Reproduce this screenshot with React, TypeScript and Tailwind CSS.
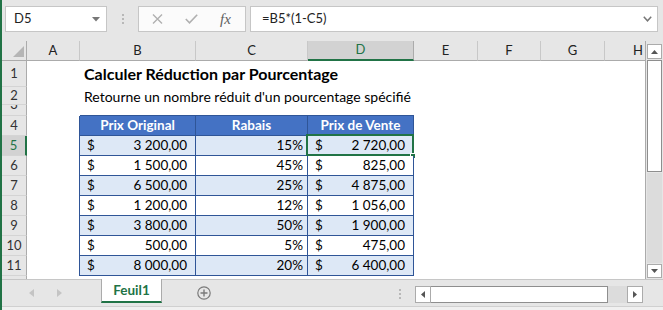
import React from "react";

const LETTERS = ["A", "B", "C", "D", "E", "F", "G", "H"];
const W = ["w-[53px]", "w-[116px]", "w-[112px]", "w-[106px]", "w-[64px]", "w-[63px]", "w-[64px]", "w-[41px]"];

const DATA: [string, string, string][] = [
  ["3 200,00", "15%", "2 720,00"],
  ["1 500,00", "45%", "825,00"],
  ["6 500,00", "25%", "4 875,00"],
  ["1 200,00", "12%", "1 056,00"],
  ["3 800,00", "50%", "1 900,00"],
  ["500,00", "5%", "475,00"],
  ["8 000,00", "20%", "6 400,00"],
];

function RowHeader({ label, selected, h, clip }: { label: string; selected?: boolean; h: string; clip?: boolean }) {
  return (
    <div
      className={
        "w-[25px] shrink-0 overflow-hidden border-b border-[#d4d4d4] text-[13px] " +
        h +
        " " +
        (selected
          ? "bg-[#d2d2d2] text-[#217346] border-r-2 border-r-[#217346]"
          : "bg-[#e6e6e6] text-[#333] border-r border-r-[#ababab]")
      }
    >
      {clip ? (
        <div className="h-[20px] -mt-[10px] flex items-center justify-center">{label}</div>
      ) : (
        <div className="h-full flex items-center justify-center">{label}</div>
      )}
    </div>
  );
}

function Blank({ i }: { i: number }) {
  return <div className={W[i] + " shrink-0 h-full bg-white"} />;
}

export default function App() {
  return (
    <div className="w-[663px] h-[310px] overflow-hidden bg-[#e6e6e6] border-l-2 border-[#217346] flex flex-col font-['Lato',sans-serif] text-black">
      {/* Formula bar */}
      <div className="h-[41px] shrink-0 flex items-start pt-[6px]">
        <div className="ml-[3px] w-[102px] h-[26px] bg-white border border-[#c6c6c6] flex items-center pl-[8px] pr-[6px] text-[13px] text-[#222]">
          <span className="flex-1">D5</span>
          <svg width="8" height="5" viewBox="0 0 8 5">
            <polygon points="0,0 8,0 4,4.5" fill="#777" />
          </svg>
        </div>
        <div className="ml-[15px] mt-[8px] flex flex-col gap-[2px]">
          <div className="w-[2px] h-[2px] bg-[#b8b8b8]" />
          <div className="w-[2px] h-[2px] bg-[#b8b8b8]" />
          <div className="w-[2px] h-[2px] bg-[#b8b8b8]" />
        </div>
        <div className="ml-[14px] w-[108px] h-[26px] bg-[#fbfbfb] border border-[#c6c6c6] flex items-center">
          <svg className="ml-[13px]" width="11" height="10" viewBox="0 0 11 10">
            <path d="M1 0.5 L10 9.5 M10 0.5 L1 9.5" stroke="#b0b0b0" strokeWidth="1.4" fill="none" />
          </svg>
          <svg className="ml-[22px]" width="13" height="10" viewBox="0 0 13 10">
            <path d="M0.8 5 L4.5 8.8 L12.2 0.8" stroke="#b0b0b0" strokeWidth="1.6" fill="none" />
          </svg>
          <span className="ml-[22px] font-['Liberation_Serif',serif] italic text-[15px] text-[#606060] leading-none">
            fx
          </span>
        </div>
        <div className="ml-[4px] w-[408px] h-[26px] bg-white border border-[#c6c6c6] flex items-center pl-[11px] pr-[5px] text-[13px] text-[#222]">
          <span className="flex-1">=B5*(1-C5)</span>
          <svg width="9" height="6" viewBox="0 0 9 6">
            <path d="M0.8 0.8 L4.5 4.8 L8.2 0.8" stroke="#777" strokeWidth="1.5" fill="none" />
          </svg>
        </div>
      </div>

      {/* Grid + vertical scrollbar */}
      <div className="h-[238px] shrink-0 flex">
        <div className="w-[644px] shrink-0 flex flex-col overflow-hidden bg-white border-r border-[#ababab]">
          {/* column headers */}
          <div className="h-[20px] shrink-0 flex">
            <div className="w-[25px] shrink-0 bg-[#e6e6e6] border-r border-b border-[#ababab] flex items-end justify-end pr-[2px] pb-[3px]">
              <svg width="11" height="11" viewBox="0 0 11 11">
                <polygon points="11,0 11,11 0,11" fill="#b5b5b5" />
              </svg>
            </div>
            {LETTERS.map((l, i) => (
              <div
                key={l}
                className={
                  W[i] +
                  " shrink-0 h-full flex items-center justify-center text-[13px] border-r " +
                  (l === "D"
                    ? "bg-[#d2d2d2] text-[#217346] border-r-[#ababab] border-b-2 border-b-[#217346]"
                    : "bg-[#e6e6e6] text-[#222] border-r-[#c8c8c8] border-b border-b-[#ababab]") +
                  (i === 7 ? " justify-end pr-[3px] border-r-0" : "")
                }
              >
                {l}
              </div>
            ))}
          </div>

          {/* row 1 */}
          <div className="h-[26px] shrink-0 flex">
            <RowHeader label="1" h="h-[26px]" />
            <Blank i={0} />
            <div className="w-[116px] shrink-0 h-full bg-white flex items-center pl-[4px] whitespace-nowrap text-[16px] font-bold overflow-visible relative z-10">
              Calculer Réduction par Pourcentage
            </div>
            {[2, 3, 4, 5, 6, 7].map((i) => (
              <Blank key={i} i={i} />
            ))}
          </div>
          {/* row 2 */}
          <div className="h-[18px] shrink-0 flex">
            <RowHeader label="2" h="h-[18px]" />
            <Blank i={0} />
            <div className="w-[116px] shrink-0 h-full bg-white flex items-center pl-[4px] whitespace-nowrap text-[14px] overflow-visible relative z-10">
              Retourne un nombre réduit d'un pourcentage spécifié
            </div>
            {[2, 3, 4, 5, 6, 7].map((i) => (
              <Blank key={i} i={i} />
            ))}
          </div>
          {/* row 3 */}
          <div className="h-[11px] shrink-0 flex">
            <RowHeader label="3" h="h-[11px]" clip />
            <Blank i={0} />
            <div className="w-[116px] shrink-0 h-full bg-white border-b border-[#2f5597]" />
            <div className="w-[112px] shrink-0 h-full bg-white border-b border-[#2f5597]" />
            <div className="w-[106px] shrink-0 h-full bg-white border-b border-[#2f5597]" />
            {[4, 5, 6, 7].map((i) => (
              <Blank key={i} i={i} />
            ))}
          </div>
          {/* row 4 header */}
          <div className="h-[20px] shrink-0 flex">
            <RowHeader label="4" h="h-[20px]" />
            <div className="w-[53px] shrink-0 h-full bg-white border-r border-[#2f5597]" />
            {["Prix Original", "Rabais", "Prix de Vente"].map((t, k) => (
              <div
                key={t}
                className={
                  W[k + 1] +
                  " shrink-0 h-full bg-[#4472c4] border-r border-b border-[#2f5597] flex items-center justify-center text-white font-bold text-[13.5px]"
                }
              >
                {t}
              </div>
            ))}
            {[4, 5, 6, 7].map((i) => (
              <Blank key={i} i={i} />
            ))}
          </div>
          {/* data rows */}
          {DATA.map((r, idx) => {
            const blue = idx % 2 === 0;
            const bg = blue ? "bg-[#dde8f6]" : "bg-white";
            return (
              <div key={idx} className="h-[20px] shrink-0 flex">
                <RowHeader label={String(idx + 5)} h="h-[20px]" selected={idx === 0} />
                <div className="w-[53px] shrink-0 h-full bg-white border-r border-[#2f5597]" />
                <div
                  className={
                    "w-[116px] shrink-0 h-full border-r border-b border-[#2f5597] flex items-center pl-[7px] pr-[8px] text-[13.5px] " +
                    bg
                  }
                >
                  <span className="flex-1">$</span>
                  <span>{r[0]}</span>
                </div>
                <div
                  className={
                    "w-[112px] shrink-0 h-full border-r border-b border-[#2f5597] flex items-center justify-end pr-[4px] text-[13.5px] " +
                    bg
                  }
                >
                  {r[1]}
                </div>
                <div
                  className={
                    "w-[106px] shrink-0 h-full border-r border-b border-[#2f5597] flex items-center pl-[7px] pr-[8px] text-[13.5px] relative " +
                    bg
                  }
                >
                  <span className="flex-1">$</span>
                  <span>{r[2]}</span>
                  {idx === 0 && (
                    <>
                      <div className="absolute -left-[2px] -top-[2px] w-[108px] h-[22px] border-2 border-[#217346] pointer-events-none" />
                      <div className="absolute -right-[3px] -bottom-[4px] w-[6px] h-[6px] bg-[#217346] border border-white" />
                    </>
                  )}
                </div>
                {[4, 5, 6, 7].map((i) => (
                  <Blank key={i} i={i} />
                ))}
              </div>
            );
          })}
          {/* partial row 12 */}
          <div className="h-[3px] shrink-0 flex">
            <div className="w-[25px] shrink-0 h-full bg-[#e6e6e6] border-r border-[#ababab]" />
            <div className="flex-1 bg-white" />
          </div>
        </div>
        {/* vertical scrollbar */}
        <div className="w-[17px] shrink-0 bg-[#e6e6e6] flex flex-col pt-[3px] pl-[1px] pr-[1px] pb-[1px] gap-[1px]">
          <div className="h-[15px] shrink-0 bg-white border border-[#ababab] flex items-center justify-center">
            <svg width="7" height="4" viewBox="0 0 7 4">
              <polygon points="0,4 7,4 3.5,0" fill="#555" />
            </svg>
          </div>
          <div className="h-[112px] shrink-0 bg-white border border-[#8e8e8e]" />
          <div className="flex-1 bg-[#dcdcdc]" />
          <div className="h-[14px] shrink-0 bg-white border border-[#ababab] flex items-center justify-center">
            <svg width="7" height="4" viewBox="0 0 7 4">
              <polygon points="0,0 7,0 3.5,4" fill="#555" />
            </svg>
          </div>
        </div>
      </div>

      {/* Sheet tabs bar */}
      <div className="h-[27px] shrink-0 flex items-start border-t border-[#c6c6c6]">
        <div className="w-[99px] shrink-0 h-full flex items-center">
          <svg className="ml-[27px]" width="5" height="8" viewBox="0 0 5 8">
            <polygon points="5,0 5,8 0,4" fill="#c4c4c4" />
          </svg>
          <svg className="ml-[23px]" width="5" height="8" viewBox="0 0 5 8">
            <polygon points="0,0 0,8 5,4" fill="#c4c4c4" />
          </svg>
        </div>
        <div className="w-[61px] h-[24px] -mt-px bg-white border-l border-r border-[#ababab] border-b-2 border-b-[#217346] flex items-center justify-center text-[13.5px] font-bold text-[#217346]">
          Feuil1
        </div>
        <div className="ml-[35px] mt-[6px]">
          <svg width="14" height="14" viewBox="0 0 14 14">
            <circle cx="7" cy="7" r="6.2" stroke="#7a7a7a" strokeWidth="1.2" fill="none" />
            <path d="M7 3.5 V10.5 M3.5 7 H10.5" stroke="#7a7a7a" strokeWidth="1.4" />
          </svg>
        </div>
        <div className="ml-[188px] mt-[9px] flex flex-col gap-[2px]">
          <div className="w-[2px] h-[2px] bg-[#b8b8b8]" />
          <div className="w-[2px] h-[2px] bg-[#b8b8b8]" />
          <div className="w-[2px] h-[2px] bg-[#b8b8b8]" />
        </div>
        <div className="ml-[14px] mt-[6px] w-[228px] h-[17px] flex">
          <div className="w-[16px] h-full bg-white border border-[#ababab] flex items-center justify-center">
            <svg width="4" height="7" viewBox="0 0 4 7">
              <polygon points="4,0 4,7 0,3.5" fill="#555" />
            </svg>
          </div>
          <div className="w-[177px] h-full bg-white border border-[#8e8e8e] border-l-0" />
          <div className="flex-1 bg-[#dcdcdc]" />
          <div className="w-[16px] h-full bg-white border border-[#ababab] flex items-center justify-center">
            <svg width="4" height="7" viewBox="0 0 4 7">
              <polygon points="0,0 0,7 4,3.5" fill="#555" />
            </svg>
          </div>
        </div>
      </div>
      <div className="flex-1 bg-[#f0f0f0] border-t border-[#d0d0d0]" />
    </div>
  );
}
